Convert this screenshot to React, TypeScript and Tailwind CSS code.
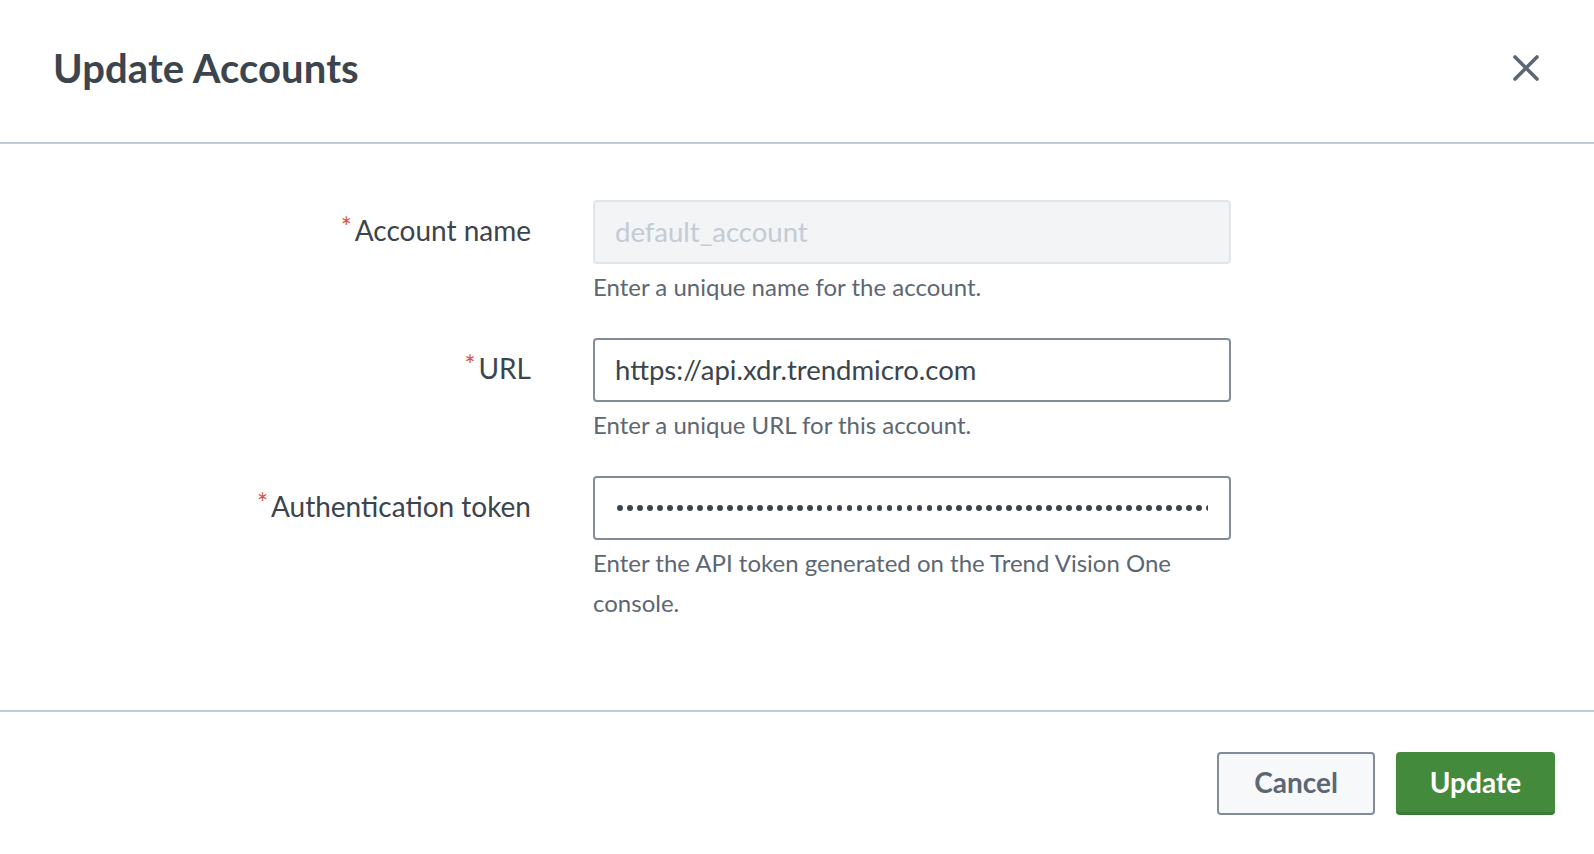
import React from "react";

const font = { fontFamily: "Lato, 'Open Sans', sans-serif" };

function Label({ text }: { text: string }) {
  return (
    <div className="w-[531px] shrink-0 flex justify-end items-center h-[64px] pb-[4px]">
      <span className="text-[#dc4e41] text-[26px] leading-none self-start mt-[14px] mr-[3px]">*</span>
      <span className="text-[28px] text-[#3c444d]">{text}</span>
    </div>
  );
}

function Help({ children }: { children: React.ReactNode }) {
  return <div className="mt-[3px] text-[24px] leading-[40px] text-[#5c6773]">{children}</div>;
}

export default function App() {
  const dots = Array.from({ length: 62 });
  return (
    <div className="w-[1594px] h-[854px] bg-white flex flex-col" style={font}>
      <div className="h-[144px] shrink-0 flex items-center justify-between pl-[53px] pr-[55px] pb-[6px] border-b-2 border-[#c3cbd4]">
        <h1 className="text-[40px] font-bold text-[#3c444d] leading-none tracking-[0.1px]">Update Accounts</h1>
        <button className="w-[26px] h-[26px] text-[#5c6773]" aria-label="Close">
          <svg viewBox="0 0 26 26" width="26" height="26" fill="none" stroke="currentColor" strokeWidth="3.6" strokeLinecap="round">
            <path d="M2 2L24 24M24 2L2 24" />
          </svg>
        </button>
      </div>
      <div className="flex-1 flex flex-col pt-[56px] gap-[31px]">
        <div className="flex">
          <Label text="Account name" />
          <div className="ml-[62px] w-[638px]">
            <div className="h-[64px] rounded-[4px] border-2 border-[#e1e6eb] bg-[#f2f4f5] flex items-center px-[20px] text-[27.5px] text-[#c3cbd4]">
              default_account
            </div>
            <Help>Enter a unique name for the account.</Help>
          </div>
        </div>
        <div className="flex">
          <Label text="URL" />
          <div className="ml-[62px] w-[638px]">
            <div className="h-[64px] rounded-[4px] border-2 border-[#818d99] bg-white flex items-center px-[20px] text-[27.5px] text-[#3c444d]">
              https://api.xdr.trendmicro.com
            </div>
            <Help>Enter a unique URL for this account.</Help>
          </div>
        </div>
        <div className="flex">
          <Label text="Authentication token" />
          <div className="ml-[62px] w-[638px]">
            <div className="h-[64px] rounded-[4px] border-2 border-[#818d99] bg-white flex items-center pl-[22px] pr-[21px]">
              <div className="flex-1 overflow-hidden flex gap-[4.2px]">
                {dots.map((_, i) => (
                  <span key={i} className="w-[5.8px] h-[5.8px] shrink-0 rounded-full bg-[#3c444d]" />
                ))}
              </div>
            </div>
            <Help>Enter the API token generated on the Trend Vision One console.</Help>
          </div>
        </div>
      </div>
      <div className="h-[144px] shrink-0 border-t-2 border-[#c3cbd4] flex justify-end items-start pt-[40px] pr-[39px] gap-[21px]">
        <button className="w-[158px] h-[63px] rounded-[4px] border-2 border-[#818d99] bg-[#f7f8fa] text-[28px] font-bold text-[#5c6773] pb-[3px]">
          Cancel
        </button>
        <button className="w-[159px] h-[63px] rounded-[4px] bg-[#448a3c] border-b-[3px] border-[#3b7a34] text-[28px] font-bold text-white">
          Update
        </button>
      </div>
    </div>
  );
}
